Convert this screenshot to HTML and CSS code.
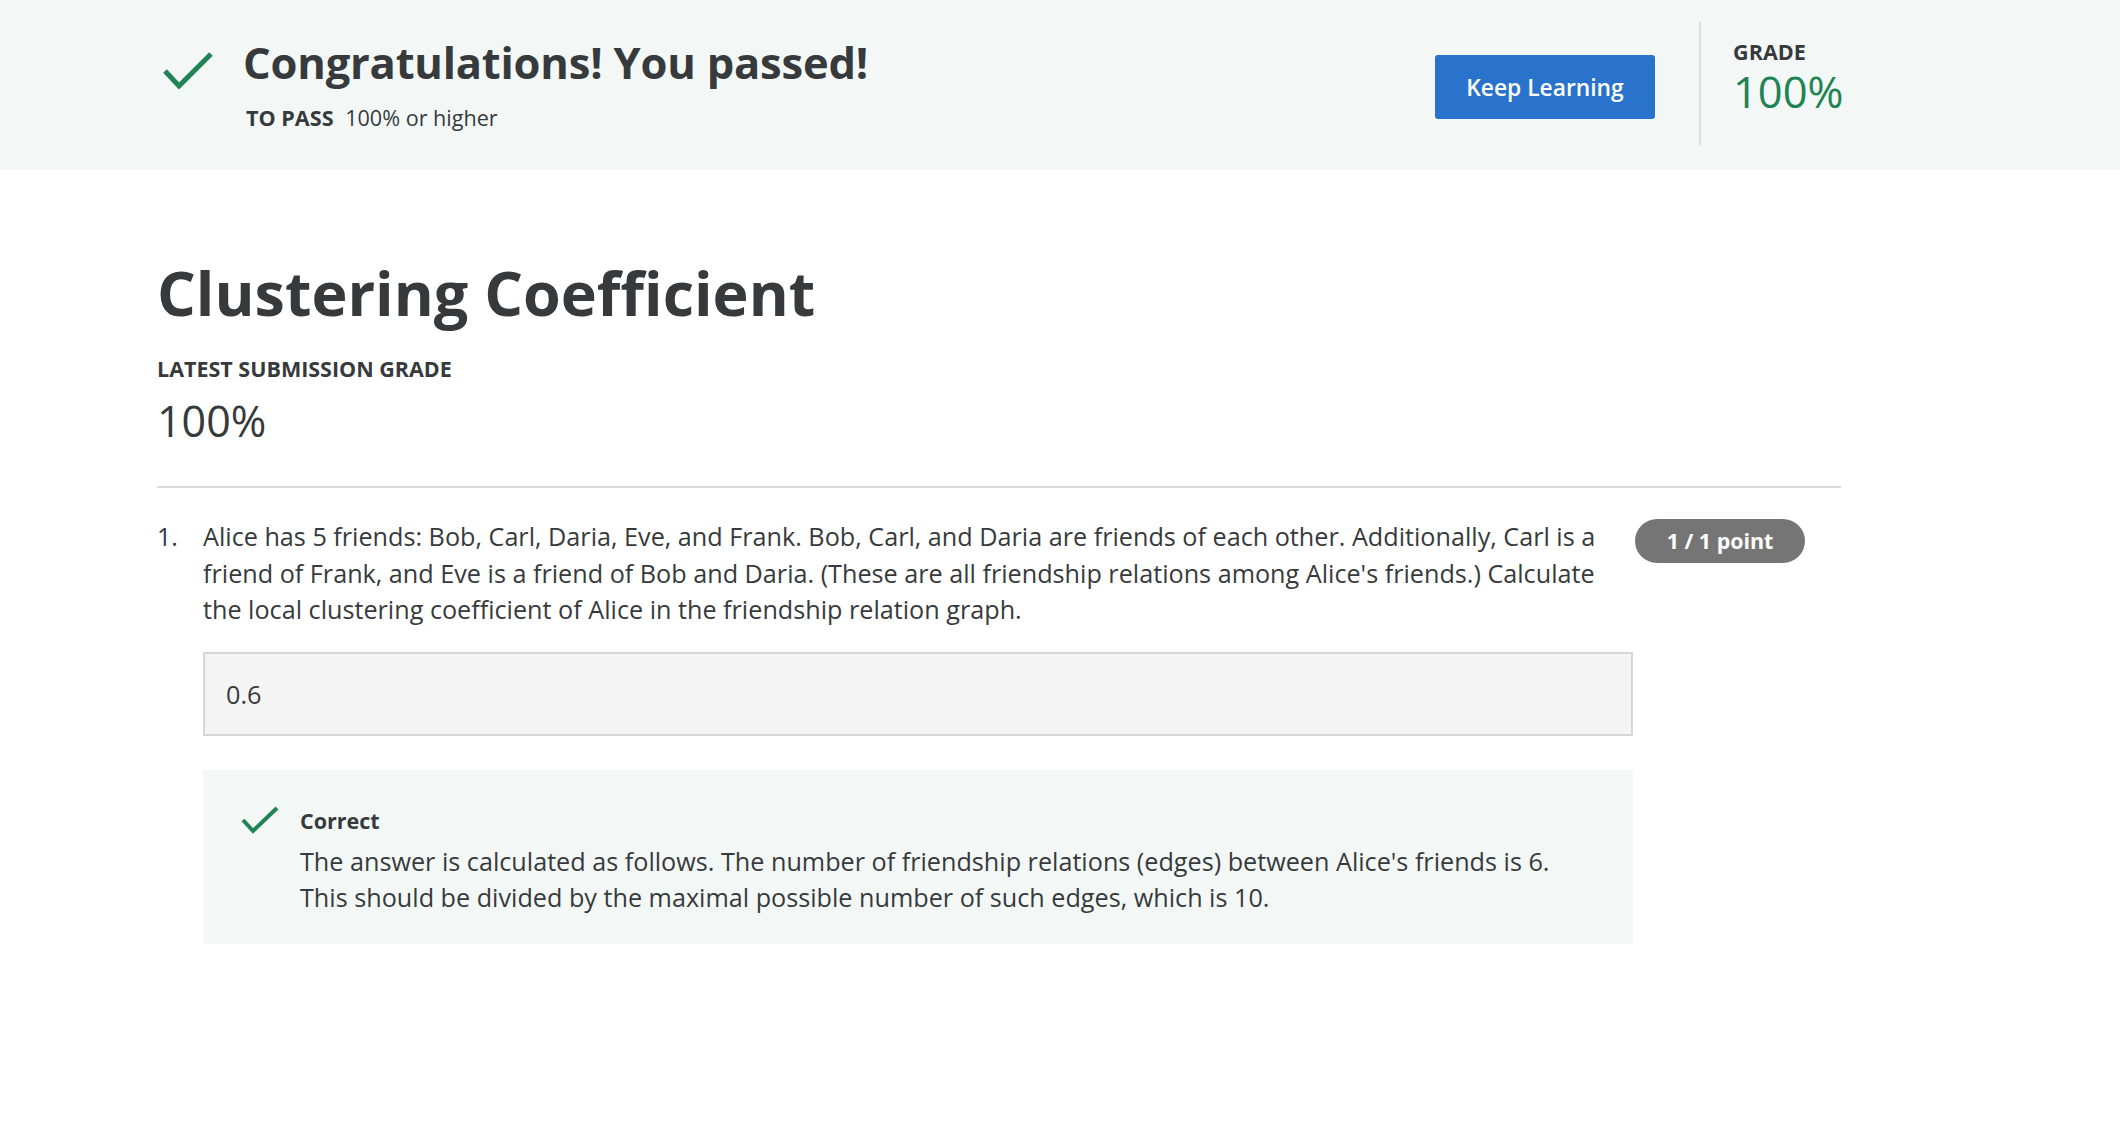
FILE: index.html
```html
<!DOCTYPE html>
<html lang="en">
<head>
<meta charset="utf-8">
<title>Clustering Coefficient</title>
<link rel="stylesheet" href="styles.css">
</head>
<body>
<header class="banner">
  <div class="banner-inner">
    <div class="pass">
      <svg class="pass-check" width="52" height="38" viewBox="0 0 52 38" aria-hidden="true">
        <path d="M3 20 L17 35 L49 3" fill="none" stroke="#1f8354" stroke-width="5"/>
      </svg>
      <div class="pass-text">
        <h1 class="pass-title">Congratulations! You passed!</h1>
        <div class="to-pass"><span class="to-pass-label">TO PASS</span> 100% or higher</div>
      </div>
    </div>
    <div class="actions">
      <button class="btn-primary" type="button">Keep Learning</button>
      <div class="grade">
        <div class="grade-label">GRADE</div>
        <div class="grade-value">100%</div>
      </div>
    </div>
  </div>
</header>

<main class="content">
  <h2 class="quiz-title">Clustering Coefficient</h2>
  <div class="latest-label">LATEST SUBMISSION GRADE</div>
  <div class="latest-value">100%</div>
  <hr class="rule">

  <section class="question">
    <div class="q-num">1.</div>
    <div class="q-body">
      <p class="q-text">Alice has 5 friends: Bob, Carl, Daria, Eve, and Frank. Bob, Carl, and Daria are friends of each other. Additionally, Carl is a friend of Frank, and Eve is a friend of Bob and Daria. (These are all friendship relations among Alice's friends.) Calculate the local clustering coefficient of Alice in the friendship relation graph.</p>
      <div class="answer">0.6</div>
      <div class="feedback">
        <svg class="fb-check" width="38" height="28" viewBox="0 0 38 28" aria-hidden="true">
          <path d="M2 14 L12 25 L36 2" fill="none" stroke="#1f8354" stroke-width="4"/>
        </svg>
        <div class="fb-text">
          <div class="fb-title">Correct</div>
          <p class="fb-body">The answer is calculated as follows. The number of friendship relations (edges) between Alice's friends is 6. This should be divided by the maximal possible number of such edges, which is 10.</p>
        </div>
      </div>
    </div>
    <div class="q-points"><span class="pill">1 / 1 point</span></div>
  </section>
</main>
</body>
</html>
```

FILE: styles.css
```css
* { box-sizing: border-box; }

html, body {
  margin: 0;
  padding: 0;
  background: #ffffff;
  font-family: "Open Sans", "Noto Sans", "Liberation Sans", sans-serif;
  color: #373a3c;
}

.banner {
  background: #f3f8f6;
  height: 170px;
}

.banner-inner {
  width: 1684px;
  margin-left: 157px;
  height: 100%;
  display: flex;
  justify-content: space-between;
  align-items: flex-start;
}

.pass {
  display: flex;
  align-items: flex-start;
  padding-top: 51px;
}

.pass-check {
  margin-left: 5px;
  margin-right: 29px;
  flex: none;
}

.pass-text {
  margin-top: -15px;
}

.pass-title {
  margin: 0;
  font-size: 43.5px;
  font-weight: 700;
  line-height: 54px;
  letter-spacing: -0.2px;
}

.to-pass {
  margin-top: 14px;
  margin-left: 3px;
  font-size: 21.6px;
  line-height: 28px;
}

.to-pass-label {
  font-weight: 700;
  margin-right: 6px;
}

.actions {
  display: flex;
  align-items: flex-start;
  padding-top: 22px;
}

.btn-primary {
  margin-top: 33px;
  width: 220px;
  height: 64px;
  border: none;
  border-radius: 3px;
  background: #2a73cc;
  color: #ffffff;
  font-family: "Open Sans", "Noto Sans", sans-serif;
  font-size: 22.8px;
  font-weight: 600;
  padding: 0;
  margin-right: 44px;
}

.grade {
  border-left: 2px solid #dedede;
  height: 123px;
  padding-left: 32px;
  width: 142px;
}

.grade-label {
  margin-top: 18px;
  font-size: 21.6px;
  font-weight: 700;
  line-height: 24px;
}

.grade-value {
  margin-top: 6px;
  font-size: 43.5px;
  line-height: 44px;
  color: #1f8354;
  font-weight: 400;
}

.content {
  width: 1684px;
  margin-left: 157px;
}

.quiz-title {
  margin: 0;
  padding-top: 85px;
  font-size: 61px;
  font-weight: 700;
  line-height: 76px;
}

.latest-label {
  margin-top: 24px;
  font-size: 21.5px;
  font-weight: 700;
  line-height: 28px;
}

.latest-value {
  margin-top: 10px;
  font-size: 43px;
  font-weight: 400;
  line-height: 56px;
}

.rule {
  margin: 37px 0 0;
  border: none;
  border-top: 2px solid #d8d8d8;
}

.question {
  display: flex;
  align-items: flex-start;
  padding-top: 30px;
}

.q-num {
  width: 46px;
  flex: none;
  font-size: 25px;
  line-height: 36.5px;
}

.q-body {
  width: 1430px;
  flex: none;
}

.q-text {
  margin: 0;
  font-size: 25.2px;
  line-height: 36.5px;
}

.answer {
  margin-top: 24px;
  height: 84px;
  background: #f4f4f4;
  border: 2px solid #d6d6d6;
  padding-left: 21px;
  display: flex;
  align-items: center;
  font-size: 25.2px;
}

.feedback {
  margin-top: 34px;
  background: #f3f8f6;
  display: flex;
  align-items: flex-start;
  padding: 36px 40px 28px 38px;
  min-height: 171px;
}

.fb-check {
  flex: none;
  margin-right: 21px;
}

.fb-text {
  margin-top: 1px;
}

.fb-title {
  font-size: 21.5px;
  font-weight: 700;
  line-height: 28px;
}

.fb-body {
  margin: 8px 0 0;
  font-size: 25.2px;
  line-height: 36.5px;
}

.q-points {
  flex: none;
  padding-left: 2px;
  margin-top: 1px;
}

.pill {
  display: inline-block;
  height: 44px;
  width: 170px;
  line-height: 44px;
  text-align: center;
  border-radius: 22px;
  background: #757575;
  color: #ffffff;
  font-weight: 700;
  font-size: 21.4px;
}
```
